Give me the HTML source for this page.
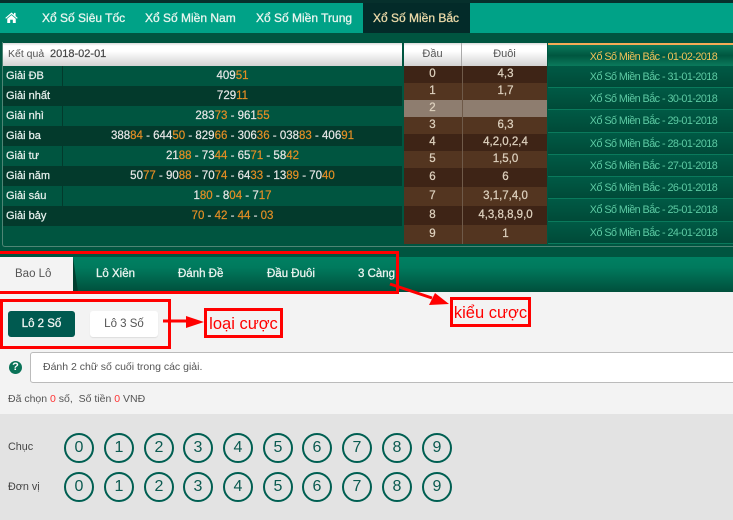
<!DOCTYPE html>
<html><head><meta charset="utf-8">
<style>
html,body{margin:0;padding:0}
body{width:733px;height:520px;overflow:hidden;position:relative;background:#f3f3f3;font-family:"Liberation Sans","Noto Sans CJK SC",sans-serif;font-size:12px}
div{box-sizing:border-box}
.nav{top:3px;height:30px;line-height:30px;color:#e8f5ef;font-size:12px;-webkit-text-stroke:.3px;white-space:nowrap}
.row{position:absolute;left:3px;width:399px;height:20px;line-height:21px;color:#eee;font-size:11.5px;background:#005540}
.row.d{background:#033a2c}
.row b{position:absolute;left:3px;top:0;font-weight:normal;font-size:11px;color:#e6efec;-webkit-text-stroke:.25px #e6efec}
.row i{position:absolute;left:59px;top:0;width:1px;height:20px;background:#033a2c}
.row span{position:absolute;left:60px;right:0;text-align:center;color:#e6e6e6;font-size:11.5px;white-space:nowrap;-webkit-text-stroke:.2px}
.row em{font-style:normal;color:#e38e25}
.br{position:absolute;left:404px;width:143px;background:#3e2416;color:#ddd0bd;font-size:11.5px;text-align:center;-webkit-text-stroke:.25px}
.br.l{background:#533520}
.br.g{background:#8e7d6f}
.br span{position:absolute;top:0;height:100%}
.br .x{left:0;width:57px}.br .y{left:58px;width:85px;border-left:1px solid #6f5a49}
.side{position:absolute;left:548px;width:211px;color:#5ccaa3;font-size:10.8px;letter-spacing:-.55px;text-align:center;white-space:nowrap;background:linear-gradient(#005a45,#004a38);border-bottom:1px solid #0a7a5c}
.tab{position:absolute;top:257px;height:35px;line-height:35px;color:#eaf3ef;font-size:11.5px;-webkit-text-stroke:.3px;white-space:nowrap}
.n{position:absolute;width:30px;height:30px;border:2.5px solid #005f52;border-radius:50%;text-align:center;line-height:26px;font-size:16px;color:#0b5a50}
.lb{position:absolute;left:8px;color:#444;font-size:10.8px}
.rb{position:absolute;border:3px solid #f00;box-sizing:border-box}
</style></head><body>
<div style="position:absolute;left:0;top:0;width:733px;height:3px;background:#06302c"></div>
<div style="position:absolute;left:0;top:3px;width:733px;height:30px;background:#00a287"></div>
<div style="position:absolute;left:0;top:33px;width:733px;height:224px;background:#005540"></div>
<div style="position:absolute;left:363px;top:3px;width:107px;height:30px;background:#032b29"></div>
<svg style="position:absolute;left:5px;top:11.5px" width="13" height="11.5" viewBox="0 0 14 13"><path fill="#fff" d="M7 .5 0 6.7l.8.9L7 2.4l6.2 5.2.8-.9-2.4-2.1V1h-1.8v2L7 .5zM2.2 7.6V12.6h3.3V8.8h3V12.6h3.3V7.6L7 3.6z"/></svg>
<div class="nav" style="position:absolute;left:42px">Xổ Số Siêu Tốc</div>
<div class="nav" style="position:absolute;left:145px">Xổ Số Miền Nam</div>
<div class="nav" style="position:absolute;left:256px">Xổ Số Miền Trung</div>
<div class="nav" style="position:absolute;left:373px;color:#ead9a8">Xổ Số Miền Bắc</div>

<div style="position:absolute;left:2px;top:42px;width:731px;height:205px;border:1px solid #4f8575;border-top:0;border-right:0;border-radius:0 0 0 3px"></div>
<div style="position:absolute;left:3px;top:43px;width:399px;height:23px;background:linear-gradient(#d8d8d8,#fff 12%,#fff 35%,#d2d2d2);line-height:23px;color:#555;font-size:10.5px;padding-left:5px">Kết quả&nbsp; <span style="color:#444;font-size:11px;-webkit-text-stroke:.2px">2018-02-01</span></div>
<div style="position:absolute;left:404px;top:43px;width:143px;height:23px;background:linear-gradient(#d8d8d8,#fff 12%,#fff 35%,#d2d2d2);color:#555;font-size:11px;line-height:23px;text-align:center"><span style="position:absolute;left:0;width:57px">Đầu</span><span style="position:absolute;left:57px;top:0;width:1px;height:23px;background:#aaa"></span><span style="position:absolute;left:58px;width:85px">Đuôi</span></div>

<div class="row" style="top:66px"><b>Giải ĐB</b><i></i><span>409<em>51</em></span></div>
<div class="row d" style="top:86px"><b>Giải nhất</b><span>729<em>11</em></span></div>
<div class="row" style="top:106px"><b>Giải nhì</b><i></i><span>283<em>73</em> - 961<em>55</em></span></div>
<div class="row d" style="top:126px"><b>Giải ba</b><span>388<em>84</em> - 644<em>50</em> - 829<em>66</em> - 306<em>36</em> - 038<em>83</em> - 406<em>91</em></span></div>
<div class="row" style="top:146px"><b>Giải tư</b><i></i><span>21<em>88</em> - 73<em>44</em> - 65<em>71</em> - 58<em>42</em></span></div>
<div class="row d" style="top:166px"><b>Giải năm</b><span>50<em>77</em> - 90<em>88</em> - 70<em>74</em> - 64<em>33</em> - 13<em>89</em> - 70<em>40</em></span></div>
<div class="row" style="top:186px"><b>Giải sáu</b><i></i><span>1<em>80</em> - 8<em>04</em> - 7<em>17</em></span></div>
<div class="row d" style="top:206px"><b>Giải bảy</b><span><em>70</em> - <em>42</em> - <em>44</em> - <em>03</em></span></div>

<div class="br" style="top:66px;height:17px;line-height:17px"><span class="x">0</span><span class="y">4,3</span></div>
<div class="br l" style="top:83px;height:17px;line-height:17px"><span class="x">1</span><span class="y">1,7</span></div>
<div class="br g" style="top:100px;height:17px;line-height:17px"><span class="x">2</span><span class="y"></span></div>
<div class="br l" style="top:117px;height:17px;line-height:17px"><span class="x">3</span><span class="y">6,3</span></div>
<div class="br" style="top:134px;height:17px;line-height:17px"><span class="x">4</span><span class="y">4,2,0,2,4</span></div>
<div class="br l" style="top:151px;height:17px;line-height:17px"><span class="x">5</span><span class="y">1,5,0</span></div>
<div class="br" style="top:168px;height:19px;line-height:19px"><span class="x">6</span><span class="y">6</span></div>
<div class="br l" style="top:187px;height:19px;line-height:19px"><span class="x">7</span><span class="y">3,1,7,4,0</span></div>
<div class="br" style="top:206px;height:19px;line-height:19px"><span class="x">8</span><span class="y">4,3,8,8,9,0</span></div>
<div class="br l" style="top:225px;height:19px;line-height:19px"><span class="x">9</span><span class="y">1</span></div>

<div class="side" style="top:43px;height:23px;line-height:24px;color:#f0c35a;background:linear-gradient(#0a7a5c,#00563f 50%,#0a7a5c);border:0;border-top:2px solid #f5ab56">Xổ Số Miền Bắc - 01-02-2018</div>
<div class="side" style="top:66px;height:22px;line-height:22px">Xổ Số Miền Bắc - 31-01-2018</div>
<div class="side" style="top:88px;height:22px;line-height:22px">Xổ Số Miền Bắc - 30-01-2018</div>
<div class="side" style="top:110px;height:23px;line-height:23px">Xổ Số Miền Bắc - 29-01-2018</div>
<div class="side" style="top:133px;height:22px;line-height:22px">Xổ Số Miền Bắc - 28-01-2018</div>
<div class="side" style="top:155px;height:22px;line-height:22px">Xổ Số Miền Bắc - 27-01-2018</div>
<div class="side" style="top:177px;height:22px;line-height:22px">Xổ Số Miền Bắc - 26-01-2018</div>
<div class="side" style="top:199px;height:23px;line-height:23px">Xổ Số Miền Bắc - 25-01-2018</div>
<div class="side" style="top:222px;height:22px;line-height:22px">Xổ Số Miền Bắc - 24-01-2018</div>

<div style="position:absolute;left:0;top:257px;width:733px;height:35px;background:linear-gradient(#008062,#007a5d 30%,#004f3c)"></div>
<svg style="position:absolute;left:0;top:257px" width="80" height="35"><path fill="#f3f3f3" d="M0 0H73V35H0z"/><path fill="#003f30" d="M73 0 78 35H73z"/></svg>
<div class="tab" style="left:15px;color:#555;-webkit-text-stroke:0">Bao Lô</div>
<div class="tab" style="left:96px">Lô Xiên</div>
<div class="tab" style="left:178px">Đánh Đề</div>
<div class="tab" style="left:267px">Đầu Đuôi</div>
<div class="tab" style="left:358px">3 Càng</div>

<div style="position:absolute;left:8px;top:311px;width:67px;height:26px;border-radius:3px;background:#005a50;color:#f0f5f3;font-size:11.5px;-webkit-text-stroke:.3px;line-height:27px;text-align:center">Lô 2 Số</div>
<div style="position:absolute;left:90px;top:311px;width:68px;height:26px;border-radius:3px;background:#fff;color:#555;font-size:11.5px;line-height:27px;text-align:center;box-shadow:0 1px 1px #ddd">Lô 3 Số</div>

<div style="position:absolute;left:9px;top:361px;width:13px;height:13px;border-radius:50%;background:#0a7358;color:#fff;font-weight:bold;font-size:11px;line-height:13px;text-align:center">?</div>
<div style="position:absolute;left:30px;top:352px;width:710px;height:31px;background:#fff;border:1px solid #bbb;border-radius:3px;padding-left:12px;line-height:29px;font-size:10.5px;color:#555">Đánh 2 chữ số cuối trong các giải.</div>
<div style="position:absolute;left:8px;top:393px;font-size:10.5px;color:#555;white-space:nowrap">Đã chọn <span style="color:#f33">0</span> số,&nbsp; Số tiền <span style="color:#f33">0</span> VNĐ</div>

<div style="position:absolute;left:0;top:414px;width:733px;height:106px;background:#e3e3e3"></div>
<div class="lb" style="top:441px">Chục</div>
<div class="lb" style="top:481px">Đơn vị</div>
<div class="n" style="left:64px;top:433px">0</div><div class="n" style="left:104px;top:433px">1</div><div class="n" style="left:144px;top:433px">2</div><div class="n" style="left:183px;top:433px">3</div><div class="n" style="left:223px;top:433px">4</div><div class="n" style="left:263px;top:433px">5</div><div class="n" style="left:302px;top:433px">6</div><div class="n" style="left:342px;top:433px">7</div><div class="n" style="left:382px;top:433px">8</div><div class="n" style="left:422px;top:433px">9</div>
<div class="n" style="left:64px;top:472px">0</div><div class="n" style="left:104px;top:472px">1</div><div class="n" style="left:144px;top:472px">2</div><div class="n" style="left:183px;top:472px">3</div><div class="n" style="left:223px;top:472px">4</div><div class="n" style="left:263px;top:472px">5</div><div class="n" style="left:302px;top:472px">6</div><div class="n" style="left:342px;top:472px">7</div><div class="n" style="left:382px;top:472px">8</div><div class="n" style="left:422px;top:472px">9</div>

<div class="rb" style="left:-3px;top:251px;width:402px;height:43px"></div>
<div class="rb" style="left:0;top:299px;width:171px;height:50px"></div>
<div class="rb" style="left:204px;top:308px;width:79px;height:30px;color:#f00;font-size:16.5px;line-height:26px;text-align:center;white-space:nowrap">loại cược</div>
<div class="rb" style="left:450px;top:297px;width:81px;height:30px;color:#f00;font-size:16.5px;line-height:26px;text-align:center;white-space:nowrap">kiểu cược</div>
<svg style="position:absolute;left:0;top:0" width="733" height="520"><path d="M163 321H188" stroke="#f00" stroke-width="3"/><path fill="#f00" d="M186 316 204 322 186 328z"/><path d="M390 284 432 298" stroke="#f00" stroke-width="3"/><path fill="#f00" d="M435 293 449 304 429 305z"/></svg>
</body></html>
